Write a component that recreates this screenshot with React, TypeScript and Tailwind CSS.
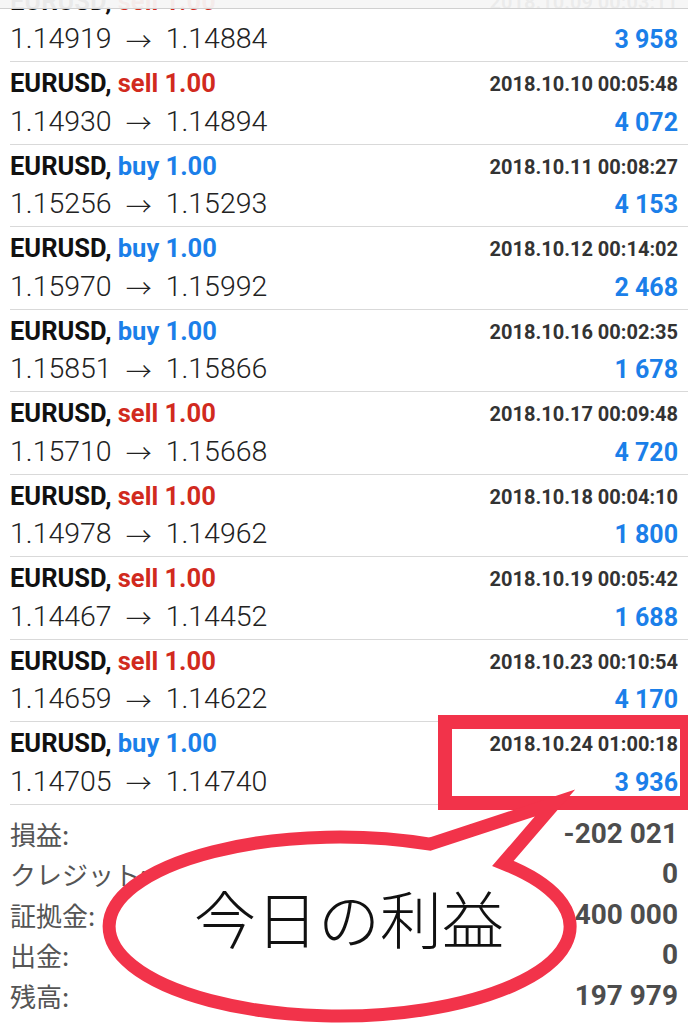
import React from "react";

type Row = { side: "buy" | "sell"; date: string; from: string; to: string; profit: string };

const rows: Row[] = [
  { side: "sell", date: "2018.10.09 00:03:11", from: "1.14919", to: "1.14884", profit: "3 958" },
  { side: "sell", date: "2018.10.10 00:05:48", from: "1.14930", to: "1.14894", profit: "4 072" },
  { side: "buy", date: "2018.10.11 00:08:27", from: "1.15256", to: "1.15293", profit: "4 153" },
  { side: "buy", date: "2018.10.12 00:14:02", from: "1.15970", to: "1.15992", profit: "2 468" },
  { side: "buy", date: "2018.10.16 00:02:35", from: "1.15851", to: "1.15866", profit: "1 678" },
  { side: "sell", date: "2018.10.17 00:09:48", from: "1.15710", to: "1.15668", profit: "4 720" },
  { side: "sell", date: "2018.10.18 00:04:10", from: "1.14978", to: "1.14962", profit: "1 800" },
  { side: "sell", date: "2018.10.19 00:05:42", from: "1.14467", to: "1.14452", profit: "1 688" },
  { side: "sell", date: "2018.10.23 00:10:54", from: "1.14659", to: "1.14622", profit: "4 170" },
  { side: "buy", date: "2018.10.24 01:00:18", from: "1.14705", to: "1.14740", profit: "3 936" },
];

const summary = [
  { label: "損益:", value: "-202 021" },
  { label: "クレジット:", value: "0" },
  { label: "証拠金:", value: "400 000" },
  { label: "出金:", value: "0" },
  { label: "残高:", value: "197 979" },
];

const latin = "font-['Roboto','Liberation_Sans',sans-serif]";
const cjk = "font-['Noto_Sans_CJK_JP','Noto_Sans',sans-serif]";

function TradeRow({ r }: { r: Row }) {
  return (
    <div className={`h-[82.5px] border-b border-[#d9d9d9] ml-[10px] pr-[10px] pt-[3px] ${latin}`}>
      <div className="flex h-[38px] items-center justify-between">
        <div className="text-[25.5px] font-bold leading-none text-[#111]">
          EURUSD,{" "}
          <span className={r.side === "sell" ? "text-[#d12a1e]" : "text-[#1b7fe9]"}>
            {r.side} 1.00
          </span>
        </div>
        <div className="text-[20px] font-bold leading-none text-[#333]">{r.date}</div>
      </div>
      <div className="flex h-[38px] items-center justify-between">
        <div className="flex items-center text-[28.5px] font-light leading-none text-[#222]">
          <span>{r.from}</span>
          <span className={`${cjk} mx-[14px] text-[26px] font-light leading-none`}>→</span>
          <span>{r.to}</span>
        </div>
        <div className="text-[25px] font-bold leading-none text-[#1b7fe9]">{r.profit}</div>
      </div>
    </div>
  );
}

export default function App() {
  return (
    <div className="relative h-[1024px] w-[688px] overflow-hidden bg-white">
      <div className="mt-[-20.5px]">
        {rows.map((r, i) => (
          <TradeRow key={i} r={r} />
        ))}
      </div>
      <div className="pt-[9px]">
        {summary.map((s, i) => (
          <div key={i} className="flex h-[40.5px] items-center justify-between px-[10px]">
            <span className={`${cjk} text-[26px] leading-none text-[#555]`}>{s.label}</span>
            <span className={`${latin} text-[28px] font-bold leading-none text-[#4d4d4d]`}>{s.value}</span>
          </div>
        ))}
      </div>

      {/* status band at top */}
      <div className="absolute left-0 top-0 h-[9px] w-full border-b border-[#d0d0d0] bg-[#f6f6f6]/95" />

      {/* annotation overlay */}
      <svg className="pointer-events-none absolute left-0 top-0" width="688" height="1024" viewBox="0 0 688 1024">
        <rect x="445" y="722" width="242" height="81" fill="none" stroke="#f2334a" strokeWidth="14" />
        <path
          d="M 430 844.2 L 555 803 L 503 863.4 A 230.5 89.5 0 1 1 430 844.2 Z"
          fill="#ffffff"
          stroke="#f2334a"
          strokeWidth="13"
          strokeLinejoin="miter"
        />
      </svg>
      <div
        className={`absolute left-[189px] top-[886px] w-[320px] text-center text-[62px] leading-none text-[#111] font-light ${cjk}`}
      >
        今日の利益
      </div>
    </div>
  );
}
